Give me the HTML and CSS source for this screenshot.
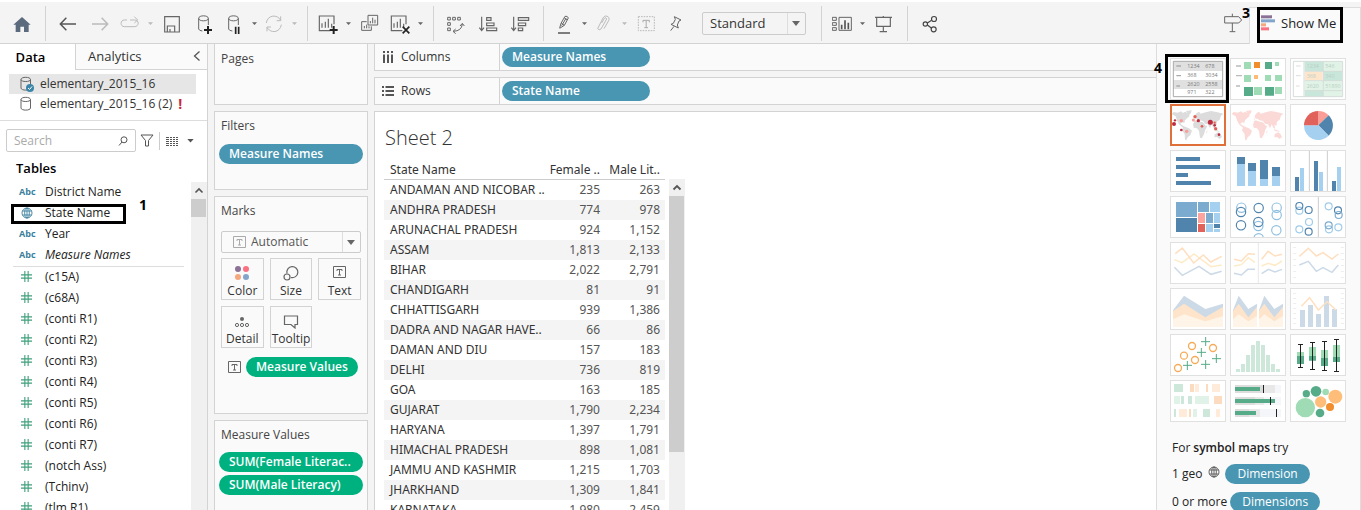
FILE: index.html
```html
<!DOCTYPE html>
<html lang="en">
<head>
<meta charset="utf-8">
<title>Sheet 2</title>
<link rel="stylesheet" href="styles.css">
</head>
<body>
<svg class="defs" aria-hidden="true">
  <symbol id="world" viewBox="0 0 162 120"><path d="M2 27L8 21L20 23L30 19L36 24L42 20L50 24L56 33L48 40L42 46L40 54L34 52L28 56L36 62L44 66L54 70L63 77L58 90L50 97L46 106L42 104L41 88L33 76L36 68L24 58L18 46L14 34zM44 18L62 16L60 24L54 30L48 22zM72 40L68 50L74 46L86 50L96 52L104 62L109 62L103 74L99 88L92 100L87 98L84 78L78 70L68 68L66 58L70 50L68 42zM71 33L77 24L85 20L88 26L104 22L120 18L140 22L157 26L150 32L146 44L138 50L136 62L130 60L133 72L127 68L122 58L117 70L111 58L102 56L96 48L86 46L80 42L72 40zM128 72L144 78L146 80L132 78zM131 88L141 82L148 86L153 96L146 102L138 96L130 97zM106 80L109 76L108 88z"/></symbol>
  <symbol id="caret" viewBox="0 0 21 21"><path d="M3 7h15l-7.5 8z"/></symbol>
  <symbol id="cyl" viewBox="0 0 14 16"><path d="M1 3.5C1 .6 10.500 .6 10.500 3.500C10.500 6.200 1 6.200 1 3.500V12C1 14.800 10.500 14.800 10.500 12V3.500" fill="none" stroke="#666"/></symbol>
  <symbol id="globe" viewBox="0 0 12 12"><g fill="none" stroke="currentColor" stroke-width=".9"><circle cx="6" cy="6" r="5"/><ellipse cx="6" cy="6" rx="2.300" ry="5"/><path d="M6 1v10M1.500 4h9M1.500 8h9"/></g></symbol>
  <symbol id="hash" viewBox="0 0 10 10"><path d="M3.500 0v10M6.500 0v10M0 3.500h10M0 6.500h10" stroke="currentColor" fill="none"/></symbol>
  <symbol id="tbox" viewBox="0 0 13 12"><path d="M.5 .5h12v11H.500zM4 5V3.500h5V5M6.500 3.500v5.500M5 9h3" fill="none" stroke="currentColor"/></symbol>
  <symbol id="sheeticon" viewBox="0 0 60 60"><path d="M45 32V7H1V51H34M9 42V29M19 42V24M28 42V15M38 42V30" fill="none" stroke="#666" stroke-width="3.500" transform="translate(3 -1)"/></symbol>
</svg>

<header class="toolbar">
  <div class="group home"><button class="tool" aria-label="Start page"><svg viewBox="36 39 60 60"><path d="M66 48L92 71H86V93H72V77H61V93H47V71H40z" fill="#5b6b7d"/></svg></button></div>
  <div class="group">
    <button class="tool" aria-label="Undo"><svg viewBox="174 39 60 60"><path d="M228 69H183M199 50L181 69L199 88" fill="none" stroke="#555" stroke-width="4.500"/></svg></button>
    <button class="tool" aria-label="Redo"><svg viewBox="270 39 60 60"><path d="M276 69H321M305 50L323 69L305 88" fill="none" stroke="#bbb" stroke-width="4.500"/></svg></button>
    <button class="tool narrow" aria-label="Replay"><svg viewBox="360 39 60 60"><path d="M381 57H373C360 57 360 77 373 77H404C417 77 419 57 404 57H390M403 47L413 57L403 66" fill="none" stroke="#bbb" stroke-width="3"/></svg></button>
    <button class="drop off" aria-label="Replay options"><svg><use href="#caret"/></svg></button>
    <button class="tool" aria-label="Save"><svg viewBox="486 39 60 60"><path d="M494 47H538V93H494zM502 92V75H524V92M510 92V84" fill="none" stroke="#666" stroke-width="3.500"/></svg></button>
    <button class="tool" aria-label="New data source"><svg viewBox="579 39 60 60"><path d="M593 52C593 42 622 42 622 52C622 62 593 62 593 52V84Q594 89 604 90M622 52V72" fill="none" stroke="#666" stroke-width="3"/><path d="M621 75V99M609 87H633" stroke="#222" stroke-width="6"/></svg></button>
    <button class="tool narrow" aria-label="Pause updates"><svg viewBox="672 39 60 60"><path d="M686 52C686 42 715 42 715 52C715 62 686 62 686 52V84Q687 89 697 90M715 52V72" fill="none" stroke="#666" stroke-width="3"/><path d="M707 77V99M716 77V99" stroke="#222" stroke-width="5"/></svg></button>
    <button class="drop" aria-label="Update options"><svg><use href="#caret"/></svg></button>
    <button class="tool narrow" aria-label="Refresh"><svg viewBox="791 39 60 60"><path d="M798 66C801 41 832 39 841 58M843 71C839 96 810 98 800 79M841 46V59H829M800 91V78H812" fill="none" stroke="#bbb" stroke-width="3"/></svg></button>
    <button class="drop off" aria-label="Refresh options"><svg><use href="#caret"/></svg></button>
  </div>
  <div class="group">
    <button class="tool narrow" aria-label="New worksheet"><svg viewBox="0 0 60 60"><use href="#sheeticon"/><path d="M47 36V60M35 48H59" stroke="#222" stroke-width="6"/></svg></button>
    <button class="drop" aria-label="New options"><svg><use href="#caret"/></svg></button>
    <button class="tool" aria-label="Duplicate"><svg viewBox="180 39 60 60"><path d="M204 43H233V72H204zM211 67V60M218 67V50M225 67V56M200 62H185V88H214V76M193 82V75M200 82V71M207 82V76" fill="none" stroke="#666" stroke-width="3"/></svg></button>
    <button class="tool narrow" aria-label="Clear sheet"><svg viewBox="0 0 60 60"><use href="#sheeticon"/><path d="M38 38L58 58M58 38L38 58" stroke="#222" stroke-width="5"/></svg></button>
    <button class="drop" aria-label="Clear options"><svg><use href="#caret"/></svg></button>
  </div>
  <div class="group">
    <button class="tool" aria-label="Swap rows and columns"><svg viewBox="438 39 60 60"><path d="M443 49H451V57H443zM458 49H466V57H458zM473 49H481V57H473zM443 65H451V73H443zM443 81H451V89H443zM487 69Q485 90 460 91M480 75L487 67L493 75M467 84L459 91L467 98" fill="none" stroke="#666" stroke-width="3"/></svg></button>
    <button class="tool" aria-label="Sort ascending"><svg viewBox="534 39 60 60"><path d="M545 47V88M538 80L545 89L552 80M560 50H573V58H560zM560 66H582V74H560zM560 81H590V89H560z" fill="none" stroke="#666" stroke-width="3.500"/></svg></button>
    <button class="tool" aria-label="Sort descending"><svg viewBox="630 39 60 60"><path d="M641 47V88M634 80L641 89L648 80M655 50H686V58H655zM655 66H677V74H655zM655 81H668V89H655z" fill="none" stroke="#666" stroke-width="3.500"/></svg></button>
  </div>
  <div class="group">
    <button class="tool narrow" aria-label="Highlight"><svg viewBox="768 39 60 60"><path d="M785 81L789 67L801 46Q809 44 811 51L799 73L785 82M790 67L799 73M799 51L807 56M791 74L804 52" fill="none" stroke="#666" stroke-width="3"/><path d="M780 96H816" stroke="#666" stroke-width="5"/></svg></button>
    <button class="drop" aria-label="Highlight options"><svg><use href="#caret"/></svg></button>
    <button class="tool narrow off" aria-label="Group members"><svg viewBox="881 39 60 60"><path d="M904 66L912 52Q917 47 919 54L902 84Q896 89 892 83L908 51Q915 40 925 49Q928 53 925 59L911 83" fill="none" stroke="#bbb" stroke-width="3"/></svg></button>
    <button class="drop off" aria-label="Group options"><svg><use href="#caret"/></svg></button>
    <button class="tool" aria-label="Show mark labels"><svg viewBox="46 39 60 60"><path d="M53 47H101V89H53z" fill="none" stroke="#bbb" stroke-width="3" stroke-dasharray="5 3"/><path d="M67 64V58H86V64M76.500 58V80M71 80H82" fill="none" stroke="#aaa" stroke-width="3"/></svg></button>
    <button class="tool narrow" aria-label="Fix axes"><svg viewBox="136 39 60 60"><path d="M161 47L181 57L175 60L170 72L173 81L151 70L158 67L164 55zM160 76L150 89" fill="none" stroke="#666" stroke-width="3"/></svg></button>
    <label class="picker fit"><select aria-label="Fit"><option>Standard</option></select></label>
  </div>
  <div class="group">
    <button class="tool narrow" aria-label="Show or hide cards"><svg viewBox="642 39 60 60"><path d="M643 49H655V58H643zM643 65H655V73H643zM643 80H655V88H643zM663 49H700V88H663z" fill="none" stroke="#666" stroke-width="3"/><path d="M671 85V71M681 85V58M691 85V65" stroke="#555" stroke-width="5"/></svg></button>
    <button class="drop" aria-label="Card options"><svg><use href="#caret"/></svg></button>
    <button class="tool" aria-label="Presentation mode"><svg viewBox="762 39 60 60"><path d="M765 49H816M770 50V76H811V50M790 76V92M779 92H801M790 49V45" fill="none" stroke="#666" stroke-width="3.500"/></svg></button>
  </div>
  <div class="group">
    <button class="tool" aria-label="Share"><svg viewBox="900 39 60 60"><g fill="none" stroke="#444" stroke-width="3.500"><circle cx="916" cy="69" r="6.500"/><circle cx="942" cy="54" r="7.500"/><circle cx="941" cy="85" r="7.500"/><path d="M922 66L935 58M922 72L934 81"/></g></svg></button>
  </div>
  <button class="tool guide" aria-label="Guide"><svg viewBox="219 39 60 60"><path d="M224 50H266L275 60L266 69H224zM247 50V41M247 69V95M239 95H256" fill="none" stroke="#666" stroke-width="3"/></svg></button>
  <div class="showtab">
    <span class="note n3">3</span>
    <button class="showme"><svg viewBox="333 44 45 48"><path d="M333 45h33v9h-33z" fill="#8a7195"/><path d="M333 57h42v9h-42z" fill="#83a5cc"/><path d="M333 69h15v9h-15z" fill="#f5a77e"/><path d="M333 81h24v9h-24z" fill="#fa7184"/></svg>Show Me</button>
  </div>
</header>

<div class="workspace">
<aside class="data">
  <div class="tabs"><button class="tab on">Data</button><button class="tab">Analytics<svg viewBox="0 0 8 10"><path d="M6.500 .5L1.500 5L6.500 9.500" fill="none" stroke="#555" stroke-width="1.300"/></svg></button></div>
  <ul class="sources">
    <li class="on"><svg viewBox="0 0 14 16"><use href="#cyl" width="14" height="16"/><circle cx="10" cy="12" r="4" fill="#3b86a8"/><path d="M8 12l1.500 1.500l2.500-3" fill="none" stroke="#fff"/></svg>elementary_2015_16</li>
    <li><svg><use href="#cyl"/></svg>elementary_2015_16 (2)<b class="warn">!</b></li>
  </ul>
  <div class="find">
    <div class="search"><input type="text" placeholder="Search" aria-label="Search"><svg viewBox="0 0 10 10"><circle cx="6" cy="3.800" r="3" fill="none" stroke="#555"/><path d="M4 6L1 9.500" stroke="#555"/></svg></div>
    <button aria-label="Filter"><svg class="funnel" viewBox="0 0 14 13"><path d="M1 1h12L8.500 6.500V12H5.500V6.500z" fill="none" stroke="#555"/></svg></button>
    <button class="listing" aria-label="View options"><svg class="lines" viewBox="0 0 12 10"><path d="M0 1.500h12M0 3.500h12M0 5.500h12M0 7.500h12M0 9.500h12" stroke="#555" stroke-dasharray="3 1 2 1 2 1 2"/></svg><svg class="car"><use href="#caret"/></svg></button>
  </div>
  <h2>Tables</h2>
  <div class="fields">
    <ul>
      <li><span class="abc">Abc</span>District Name</li>
      <li class="boxed"><svg class="globe"><use href="#globe"/></svg>State Name<span class="note n1">1</span></li>
      <li><span class="abc">Abc</span>Year</li>
      <li class="last"><span class="abc">Abc</span><i>Measure Names</i></li>
      <li><svg class="hash"><use href="#hash"/></svg>(c15A)</li>
      <li><svg class="hash"><use href="#hash"/></svg>(c68A)</li>
      <li><svg class="hash"><use href="#hash"/></svg>(conti R1)</li>
      <li><svg class="hash"><use href="#hash"/></svg>(conti R2)</li>
      <li><svg class="hash"><use href="#hash"/></svg>(conti R3)</li>
      <li><svg class="hash"><use href="#hash"/></svg>(conti R4)</li>
      <li><svg class="hash"><use href="#hash"/></svg>(conti R5)</li>
      <li><svg class="hash"><use href="#hash"/></svg>(conti R6)</li>
      <li><svg class="hash"><use href="#hash"/></svg>(conti R7)</li>
      <li><svg class="hash"><use href="#hash"/></svg>(notch Ass)</li>
      <li><svg class="hash"><use href="#hash"/></svg>(Tchinv)</li>
      <li><svg class="hash"><use href="#hash"/></svg>(tlm R1)</li>
    </ul>
    <div class="scroll"><svg viewBox="0 0 16 17"><path d="M4.500 10.500L8 7L11.500 10.500" fill="none" stroke="#555" stroke-width="1.600"/></svg><div class="thumb short"></div></div>
  </div>
</aside>

<section class="cards">
  <div class="card pages"><h3>Pages</h3></div>
  <div class="card filters"><h3>Filters</h3><button class="pill">Measure Names</button></div>
  <div class="card marks"><h3>Marks</h3>
    <label class="picker kind"><svg class="tbox"><use href="#tbox"/></svg><select aria-label="Mark type"><option>Automatic</option></select></label>
    <div class="props">
      <button><svg viewBox="0 0 18 16"><circle cx="5" cy="4" r="3" fill="#8a7195"/><circle cx="13" cy="4" r="3" fill="#fa7184"/><circle cx="5" cy="12" r="3" fill="#f5a77e"/><circle cx="13" cy="12" r="3" fill="#83a5cc"/></svg>Color</button>
      <button><svg viewBox="0 0 18 16"><g fill="none" stroke="#666" stroke-width="1.200"><path d="M5 8.500A5.500 5.500 0 1 1 9 12.500"/><circle cx="5" cy="12" r="3"/></g></svg>Size</button>
      <button><svg class="tbox"><use href="#tbox"/></svg>Text</button>
      <button><svg viewBox="0 0 18 16"><circle cx="9" cy="6" r="2" fill="#666"/><g fill="none" stroke="#666"><circle cx="4" cy="12" r="1.600"/><circle cx="9" cy="12" r="1.600"/><circle cx="14" cy="12" r="1.600"/></g></svg>Detail</button>
      <button><svg viewBox="0 0 18 16"><path d="M2.500 3h13v8.500H13V15L9 11.500H2.500z" fill="none" stroke="#666" stroke-width="1.200"/></svg>Tooltip</button>
    </div>
    <div class="enc"><svg class="tbox"><use href="#tbox"/></svg><button class="pill green">Measure Values</button></div>
  </div>
  <div class="card values"><h3>Measure Values</h3><button class="pill green">SUM(Female Literac..</button><button class="pill green">SUM(Male Literacy)</button></div>
</section>

<main class="view">
  <div class="shelf"><div class="name"><svg viewBox="0 0 12 12"><path d="M2 3.500V12M6 3.500V12M10 3.500V12M2 0v2M6 0v2M10 0v2" stroke="#555" stroke-width="2"/></svg>Columns</div><button class="pill">Measure Names</button></div>
  <div class="shelf"><div class="name"><svg viewBox="0 0 12 12"><path d="M3.500 2H12M3.500 6H12M3.500 10H12M0 2h2M0 6h2M0 10h2" stroke="#555" stroke-width="2"/></svg>Rows</div><button class="pill">State Name</button></div>
  <div class="sheet">
    <h1>Sheet 2</h1>
    <div class="grid">
    <table>
      <thead><tr><th scope="col">State Name</th><th scope="col">Female ..</th><th scope="col">Male Lit..</th></tr></thead>
      <tbody>
        <tr><td>ANDAMAN AND NICOBAR ..</td><td>235</td><td>263</td></tr>
        <tr><td>ANDHRA PRADESH</td><td>774</td><td>978</td></tr>
        <tr><td>ARUNACHAL PRADESH</td><td>924</td><td>1,152</td></tr>
        <tr><td>ASSAM</td><td>1,813</td><td>2,133</td></tr>
        <tr><td>BIHAR</td><td>2,022</td><td>2,791</td></tr>
        <tr><td>CHANDIGARH</td><td>81</td><td>91</td></tr>
        <tr><td>CHHATTISGARH</td><td>939</td><td>1,386</td></tr>
        <tr><td>DADRA AND NAGAR HAVE..</td><td>66</td><td>86</td></tr>
        <tr><td>DAMAN AND DIU</td><td>157</td><td>183</td></tr>
        <tr><td>DELHI</td><td>736</td><td>819</td></tr>
        <tr><td>GOA</td><td>163</td><td>185</td></tr>
        <tr><td>GUJARAT</td><td>1,790</td><td>2,234</td></tr>
        <tr><td>HARYANA</td><td>1,397</td><td>1,791</td></tr>
        <tr><td>HIMACHAL PRADESH</td><td>898</td><td>1,081</td></tr>
        <tr><td>JAMMU AND KASHMIR</td><td>1,215</td><td>1,703</td></tr>
        <tr><td>JHARKHAND</td><td>1,309</td><td>1,841</td></tr>
        <tr><td>KARNATAKA</td><td>1,980</td><td>2,459</td></tr>
      </tbody>
    </table>
    <div class="scroll"><svg viewBox="0 0 16 17"><path d="M4.500 10.500L8 7L11.500 10.500" fill="none" stroke="#555" stroke-width="1.800"/></svg><div class="thumb tall"></div></div>
    </div>
  </div>
</main>

<aside class="show">
  <div class="charts">
    <button class="picked" aria-label="Text table"><svg viewBox="63 177 162 120"><path d="M70 184h148v106H70z" fill="#fff"/><path d="M70 184h148v29H70zM70 240h148v27H70z" fill="#e0e0e0"/><path d="M70 184h148v106H70z" fill="none" stroke="#aaa" stroke-width="3"/><path d="M79 198h14M79 227h14M79 258h11" stroke="#aaa" stroke-width="4"/><g font-size="16" fill="#777"><text x="112" y="205">1234</text><text x="166" y="205">678</text><text x="112" y="232">368</text><text x="166" y="232">3034</text><text x="112" y="259">2620</text><text x="166" y="259">2558</text><text x="112" y="283">971</text><text x="166" y="283">322</text></g></svg><span class="note n4">4</span></button>
    <button aria-label="Heat map"><svg viewBox="243 177 162 120"><path d="M258 198h15M258 227h18M258 258h12" stroke="#bbb" stroke-width="4"/><path d="M282 186h21v21h-21zM375 186h12v12h-12zM282 225h21v21h-21zM345 225h18v18h-18zM375 225h21v18h-21zM312 261h24v24h-24zM375 261h21v21h-21z" fill="#9fdbb5"/><path d="M345 186h21v21h-21zM282 261h27v27h-27zM345 261h27v26h-27z" fill="#56ab88"/><path d="M312 186h18v18h-18z" fill="#f08e2e"/><path d="M312 225h12v12h-12z" fill="#fdbb74"/></svg></button>
    <button aria-label="Highlight table"><svg viewBox="423 177 162 120"><path d="M464 184h56v29h-56zM520 213h57v30h-57zM464 270h56v20h-56z" fill="#c9e6db"/><path d="M520 184h57v29h-57zM464 243h113v27H464zM520 270h57v20h-57z" fill="#e0f3e6"/><path d="M464 215h54v26h-54z" fill="#fee6cc"/><path d="M430 184h148v106H430zM462 184v106M520 184v106M464 214h113M464 242h113M464 272h113" fill="none" stroke="#d5ddd9" stroke-width="3"/><path d="M438 198h14M438 227h14M438 258h11" stroke="#ddd" stroke-width="3"/><g font-size="16" fill="#bbcfc5"><text x="470" y="205">1234</text><text x="526" y="205">546</text><text x="470" y="234">368</text><text x="526" y="234">340</text><text x="470" y="264">2620</text><text x="526" y="264">51890</text></g></svg></button>
    <button class="best" aria-label="Symbol map"><svg viewBox="63 315 162 120"><use href="#world" x="63" y="315" width="162" height="120" fill="#dcdcdc"/><g fill="#bf2c40"><circle cx="72" cy="372" r="6"/><circle cx="75" cy="361" r="3.500"/><circle cx="145" cy="362" r="5"/><circle cx="181" cy="367" r="7.500"/><circle cx="94" cy="390" r="4"/><circle cx="207" cy="404" r="4"/><circle cx="194" cy="376" r="4"/></g><g fill="#e2615a"><circle cx="135" cy="350" r="5"/><circle cx="156" cy="379" r="4"/><circle cx="197" cy="386" r="5"/><circle cx="194" cy="368" r="3.500"/></g><g fill="#fb9d97"><circle cx="94" cy="362" r="5"/><circle cx="110" cy="394" r="5"/><circle cx="130" cy="360" r="4.500"/></g></svg></button>
    <button aria-label="Filled map"><svg viewBox="0 0 162 120"><use href="#world" width="162" height="120" fill="#fbd9d7"/></svg></button>
    <button aria-label="Pie chart"><svg viewBox="423 315 162 120"><path d="M505 376V333A43 43 0 0 1 536 346z" fill="#fb9d97"/><path d="M505 376L536 346A43 43 0 0 1 536 407z" fill="#5084ad"/><path d="M505 376L536 407A43 43 0 0 1 462 376z" fill="#a5d0f0"/><path d="M505 376H462A43 43 0 0 1 505 333z" fill="#e0625a"/></svg></button>

    <button aria-label="Horizontal bars"><svg viewBox="33 18 162 120"><path d="M48 36h72v12H48zM48 60h132v12H48zM48 84h36v12H48zM48 108h105v12H48z" fill="#5084ad"/></svg></button>
    <button aria-label="Stacked bars"><svg viewBox="213 18 162 120"><path d="M231 36h24v21h-24zM264 54h24v24h-24zM300 45h24v57h-24zM336 66h24v27h-24z" fill="#5084ad"/><path d="M231 57h24v66h-24zM264 78h24v45h-24zM300 102h24v21h-24zM336 93h24v30h-24z" fill="#a5d0f0"/></svg></button>
    <button aria-label="Side-by-side bars"><svg viewBox="393 18 162 120"><path d="M448 18v120M502 18v120" stroke="#ccc" stroke-width="3"/><path d="M405 96h12v42h-12zM462 48h12v90h-12zM516 108h12v30h-12z" fill="#5084ad"/><path d="M420 69h12v69h-12zM477 81h12v57h-12zM531 66h12v72h-12z" fill="#a5d0f0"/></svg></button>

    <button aria-label="Treemap"><svg viewBox="33 156 162 120"><path d="M48 171h63v45H48zM114 171h33v30h-33zM138 204h21v30h-21z" fill="#7cabd0"/><path d="M48 219h63v42H48zM162 237h18v12h-18z" fill="#5084ad"/><path d="M150 171h30v30h-30zM162 204h18v30h-18zM138 237h21v24h-21zM162 252h18v9h-18z" fill="#a5d0f0"/><path d="M114 204h21v30h-21z" fill="#fea49e"/><path d="M114 237h21v24h-21z" fill="#e0625a"/></svg></button>
    <button aria-label="Circle views"><svg viewBox="213 156 162 120"><g fill="none" stroke="#8fbfe0" stroke-width="3.500"><circle cx="244" cy="188" r="14"/><circle cx="295" cy="243" r="14"/><circle cx="296" cy="280" r="14"/><circle cx="350" cy="210" r="14"/><circle cx="349" cy="256" r="14"/><circle cx="350" cy="188" r="14"/><g stroke="#5084ad"><circle cx="243" cy="201" r="14"/><circle cx="243" cy="241" r="14"/><circle cx="296" cy="189" r="14"/><circle cx="295" cy="231" r="14"/></g></g></svg></button>
    <button aria-label="Side-by-side circles"><svg viewBox="393 156 162 120"><path d="M475 156v120" stroke="#ccc" stroke-width="3"/><g fill="none" stroke="#9fcbe9" stroke-width="3.500"><circle cx="418" cy="197" r="10.500"/><circle cx="418" cy="253" r="10.500"/><circle cx="447" cy="231" r="10.500"/><circle cx="506" cy="184" r="10.500"/><circle cx="535" cy="247" r="10.500"/><circle cx="507" cy="253" r="10.500"/><g stroke="#5084ad"><circle cx="418" cy="183" r="10.500"/><circle cx="446" cy="195" r="10.500"/><circle cx="446" cy="260" r="10.500"/><circle cx="534" cy="196" r="10.500"/></g><g stroke="#7cabd0"><circle cx="506" cy="241" r="10.500"/><circle cx="536" cy="210" r="10.500"/></g></g></svg></button>

    <button aria-label="Continuous lines"><svg viewBox="33 294 162 120"><g fill="none" stroke-width="4.500"><path d="M43 344L66 353L102 327L153 365L185 360" stroke="#fdebc8"/><path d="M46 326L67 309L101 354L130 330L152 351L185 334" stroke="#fedfc0"/><path d="M43 367L67 391L117 364L153 388L185 379" stroke="#ccdae7"/></g></svg></button>
    <button aria-label="Discrete lines"><svg viewBox="213 294 162 120"><path d="M295 294v120" stroke="#e8e8e8" stroke-width="3"/><g fill="none" stroke-width="4.500"><path d="M222 363L244 359L265 338L285 352M305 363L324 355L345 361L366 348" stroke="#fdebc8"/><path d="M222 343L244 348L265 326L285 328M305 343L324 319L345 333L366 328" stroke="#fedfc0"/><path d="M222 385L244 390L263 373H285M305 386L325 373L345 381L366 373" stroke="#ccdae7"/></g></svg></button>
    <button aria-label="Dual lines"><svg viewBox="393 294 162 120"><path d="M404 306v96M547 306v96" stroke="#eee" stroke-width="9" stroke-dasharray="3 15"/><g fill="none" stroke-width="4.500"><path d="M418 334L445 310L469 333L489 323L516 342L535 327" stroke="#fedfc0"/><path d="M418 360L445 349L469 379L489 368L516 382L535 360" stroke="#ccdae7"/></g></svg></button>

    <button aria-label="Continuous area"><svg viewBox="33 12 162 120"><path d="M39 76L72 32L136 72L189 56V126H39z" fill="#ccdae7"/><path d="M39 78L72 56L136 97L189 66V126H39z" fill="#fee4ca"/><path d="M39 103L72 88L136 109L189 93V126H39z" fill="#fef4e7"/></svg></button>
    <button aria-label="Discrete area"><svg viewBox="213 12 162 120"><path d="M219 76L236 32L265 72L291 56V126H219zM297 76L313 32L343 72L369 56V126H297z" fill="#ccdae7"/><path d="M219 78L236 56L265 97L291 66V126H219zM297 78L313 56L343 97L369 66V126H297z" fill="#fee4ca"/><path d="M219 103L236 88L265 109L291 93V126H219zM297 103L313 88L343 109L369 93V126H297z" fill="#fef4e7"/></svg></button>
    <button aria-label="Dual combination"><svg viewBox="393 12 162 120"><path d="M404 24v96M547 24v96" stroke="#eee" stroke-width="9" stroke-dasharray="3 12"/><path d="M420 75h15v51h-15zM444 60h15v66h-15zM468 87h15v39h-15zM492 33h15v93h-15zM516 72h15v54h-15z" fill="#ccdae7"/><path d="M424 64L449 38L475 75L501 50L528 75" fill="none" stroke="#fee0c2" stroke-width="4.500"/></svg></button>

    <button aria-label="Scatter plot"><svg viewBox="33 150 162 120"><g fill="none" stroke="#f5ac5a" stroke-width="4"><circle cx="96" cy="183" r="10.500"/><circle cx="159" cy="189" r="10.500"/><circle cx="72" cy="212" r="10.500"/><circle cx="105" cy="225" r="10.500"/><circle cx="54" cy="249" r="10.500"/></g><path d="M123 170h27M137 156v27M111 202h27M124 189v27M156 221h27M169 207v27M123 238h27M137 225v27M69 241h27M82 228v27" stroke="#56ab88" stroke-width="3"/></svg></button>
    <button aria-label="Histogram"><svg viewBox="213 150 162 120"><path d="M228 252h12v9h-12zM243 237h12v24h-12zM258 210h12v51h-12zM273 180h12v81h-12zM288 168h12v93h-12zM303 180h12v81h-12zM318 210h12v51h-12zM333 237h12v24h-12zM348 252h12v9h-12z" fill="#cde7db"/></svg></button>
    <button aria-label="Box plot"><svg viewBox="393 150 162 120"><path d="M411 201h21v12h-21zM447 186h21v27h-21zM483 195h21v24h-21zM519 180h21v36h-21z" fill="#9fdbb5"/><path d="M411 213h21v24h-21zM447 213h21v14h-21zM483 219h21v24h-21zM519 216h21v15h-21z" fill="#56ab88"/><path d="M421.500 178v69M457.500 172v81M493.500 170v87M529.500 163v96M414 178.500h15M414 247.500h15M450 172.500h15M450 253.500h15M486 169.500h15M486 256.500h15M522 163.500h15M522 259.500h15" stroke="#222" stroke-width="3"/></svg></button>

    <button aria-label="Gantt"><svg viewBox="33 288 162 120"><path d="M42 297h27v24H42zM63 333h9v24h-9zM84 333h12v24H84zM42 372h6v24h-6zM129 372h21v24h-21z" fill="#cde7db"/><path d="M42 333h18v24H42zM105 333h42v24h-42zM99 372h12v24H99z" fill="#e1f3e8"/><path d="M90 297h12v24H90zM138 297h6v24h-6zM162 333h24v24h-24zM87 372h6v24h-6z" fill="#fbdcc0"/><path d="M105 297h12v24h-12zM156 297h24v24h-24zM57 372h24v24H57zM168 372h12v24h-12z" fill="#feebd9"/></svg></button>
    <button aria-label="Bullet graph"><svg viewBox="213 288 162 120"><path d="M225 300h138v24H225zM225 336h138v24H225zM225 372h138v24H225z" fill="#f4f6f9"/><path d="M225 300h120v24H225zM225 336h87v24H225zM225 372h75v24H225z" fill="#e8e8e8"/><path d="M225 300h85v24H225zM225 336h60v24H225zM225 372h42v24H225z" fill="#ddd"/><path d="M225 306h75v12H225zM225 342h120v12H225zM225 378h63v12H225z" fill="#56ab88"/><path d="M310.500 300v24M331.500 336v24M349.500 372v24" stroke="#222" stroke-width="3"/></svg></button>
    <button aria-label="Packed bubbles"><svg viewBox="393 288 162 120"><g fill="#56ab88"><circle cx="439" cy="326" r="11"/><circle cx="468" cy="319" r="16"/><circle cx="480" cy="384" r="13"/></g><g fill="#9fdbb5"><circle cx="436" cy="368" r="29"/><circle cx="497" cy="321" r="10"/></g><g fill="#febd78"><circle cx="482" cy="351" r="17"/><circle cx="526" cy="335" r="21"/></g><circle cx="510" cy="366" r="12" fill="#f08e2e"/></svg></button>
  </div>
  <div class="hint">
    <p>For <b>symbol maps</b> try</p>
    <p>1 geo <svg class="geo"><use href="#globe"/></svg><span class="pill plain">Dimension</span></p>
    <p>0 or more <span class="pill plain">Dimensions</span></p>
  </div>
</aside>
</div>
</body>
</html>
```
FILE: styles.css
```css
*, *::before, *::after { box-sizing: border-box; }
html, body { height: 100%; }
body {
  margin: 0; padding-top: 2px; overflow: hidden;
  display: flex; flex-direction: column;
  background: #fff; color: #333;
  font: 12px/20px "Open Sans", "Noto Sans", sans-serif;
}
button, select, input { font: inherit; color: inherit; margin: 0; padding: 0; border: 0; background: none; }
h1, h2, h3, p, ul { margin: 0; padding: 0; font-weight: 400; font-size: inherit; list-style: none; }
svg { display: block; flex: none; }
.defs { position: absolute; width: 0; height: 0; }

/* toolbar */
.toolbar { flex: none; display: flex; align-items: stretch; height: 42px; background: #f4f4f4; border-bottom: 1px solid #d3d3d3; }
.group { display: flex; align-items: center; margin: 4px 0 2px; padding: 0 7px 0 6px; border-right: 1px solid #d3d3d3; }
.group.home { width: 46px; }
.group:nth-of-type(7) { border: 0; }
.tool { width: 32px; display: flex; justify-content: center; align-items: center; }
.tool.narrow { width: 28px; }
.tool svg { width: 20px; height: 20px; }
.drop { width: 12px; display: flex; justify-content: center; fill: #666; }
.drop svg { width: 7px; height: 7px; }
.drop.off { fill: #bbb; }
.picker { position: relative; display: flex; align-items: center; border: 1px solid #ccc; border-radius: 2px; background: #fafafa; }
.picker select { appearance: none; width: 100%; height: 100%; }
.picker::before { content: ""; position: absolute; right: 17px; top: 0; bottom: 0; border-left: 1px solid #ddd; }
.picker::after { content: ""; position: absolute; right: 5px; top: 8px; border: 4px solid transparent; border-top: 5px solid #666; border-bottom: 0; }
.fit { width: 104px; height: 23px; margin: 0 8px 0 12px; background: #f4f4f4; }
.fit select { padding: 0 0 2px 7px; font-size: 13px; }
.guide { margin-left: auto; }
.showtab { position: relative; width: 112px; margin: 5px 0 -1px; padding-left: 7px; background: #fafafa; border: solid #ddd; border-width: 1px 1px 0; }
.showme { width: 86px; height: 36px; margin-top: -1px; border: 3px solid #000; display: flex; align-items: center; gap: 5px; padding: 0 0 4px 1px; font-size: 13px; color: #222; white-space: nowrap; }
.showme svg { width: 15px; height: 16px; }
.note { position: absolute; font: 700 14px/16px "Open Sans", sans-serif; color: #000; }
.n3 { left: -8px; top: -3px; }
.n4 { left: -17px; top: 1px; }

.workspace { flex: 1; min-height: 0; display: flex; background: #f4f4f4; }

/* data pane */
.data { width: 208px; flex: none; background: #fff; border-right: 1px solid #d3d3d3; display: flex; flex-direction: column; }
.tabs { display: flex; height: 26px; flex: none; }
.tab { font-size: 13px; }
.tab.on { width: 75px; padding-right: 14px; font-weight: 600; color: #000; }
.tab:not(.on) { flex: 1; display: flex; align-items: center; justify-content: space-between; padding: 0 6px 2px 12px; background: #fafafa; border: solid #d3d3d3; border-width: 0 0 1px 1px; }
.tab svg { width: 8px; height: 10px; }
.sources { padding: 4px 0 6px 9px; border-bottom: 1px solid #ddd; flex: none; }
.sources li { display: flex; align-items: center; width: 187px; height: 20px; padding-left: 11px; }
.sources li.on { background: #e6e6e6; }
.sources svg { width: 14px; height: 16px; margin-right: 6px; }
.warn { margin-left: 6px; color: #c8283c; font-size: 14px; }
.find { display: flex; align-items: center; margin: 8px 10px 0 6px; height: 23px; }
.search { display: flex; align-items: center; width: 130px; height: 23px; padding: 0 7px; border: 1px solid #ccc; border-radius: 2px; }
.search input { flex: 1; min-width: 0; outline: 0; }
.search input::placeholder { color: #aaa; }
.search svg { width: 10px; height: 10px; }
.funnel { width: 14px; height: 13px; margin: 0 5px 0 4px; }
.listing { display: flex; align-items: center; gap: 8px; height: 18px; padding-left: 6px; border-left: 1px solid #ccc; }
.lines { width: 12px; height: 10px; }
.car { width: 9px; height: 9px; fill: #555; }
.data h2 { padding: 6px 0 4px 16px; font-size: 13px; font-weight: 600; color: #000; flex: none; }
.fields { flex: 1; min-height: 0; display: flex; justify-content: space-between; overflow: hidden; }
.fields ul { width: 171px; margin-left: 13px; }
.fields li { position: relative; display: flex; align-items: center; height: 21px; padding: 0 0 2px 32px; color: #222; }
.fields li > svg, .abc { position: absolute; left: 6px; }
.abc { font: 700 9px/12px "Open Sans", sans-serif; color: #3b7f9c; }
.globe { width: 12px; height: 12px; color: #3b7f9c; }
.fields .globe, .fields .hash { left: 8px; }
.hash { width: 11px; height: 11px; color: #3fa07c; }
.fields .last { height: 22px; border-bottom: 1px solid #ddd; }
.fields .boxed::before { content: ""; position: absolute; left: -2px; top: 1px; width: 115px; height: 20px; border: 3px solid #000; }
.n1 { left: 126px; top: -6px; }
.scroll { width: 16px; background: #f0f0f0; overflow: hidden; }
.scroll svg { width: 16px; height: 17px; }
.thumb { background: #cdcdcd; width: 15px; }
.thumb.short { height: 18px; }
.thumb.tall { height: 256px; }

/* cards */
.cards { width: 154px; flex: none; margin: 0 6px; display: flex; flex-direction: column; gap: 6px; overflow: hidden; }
.card { flex: none; background: #fafafa; border: 1px solid #d3d3d3; padding: 0 4px; }
.card:first-child { border-top: 0; }
.card h3 { padding: 4px 2px 7px; color: #444; }
.pages { height: 61px; }
.pages h3 { padding-top: 5px; }
.filters { height: 79px; }
.filters h3 { padding-bottom: 8px; }
.marks { height: 218px; }
.values { height: 120px; }
.pill { display: block; height: 20px; padding: 0 10px; border-radius: 10px; background: #4996b2; color: #fff; font-weight: 600; font-size: 12px; line-height: 20px; text-align: left; white-space: nowrap; }
.pill.green { background: #00b180; }
.card > .pill { width: 100%; margin-bottom: 3px; }
.kind { height: 22px; margin: 3px 2px 5px; padding-left: 11px; }
.kind select { padding-left: 5px; color: #555; }
.tbox { width: 13px; height: 12px; color: #666; }
.kind .tbox { color: #aaa; }
.props { display: grid; grid-template-columns: repeat(3, 1fr); gap: 6px; margin: 0 2px; }
.props button { height: 42px; border: 1px solid #d3d3d3; display: flex; flex-direction: column; align-items: center; justify-content: flex-end; gap: 1px; line-height: 17px; }
.props svg { width: 18px; height: 16px; }
.props .tbox { width: 13px; height: 12px; margin-bottom: 3px; }
.enc { display: flex; align-items: center; gap: 5px; margin: 9px 6px 0 9px; }
.enc .pill { flex: 1; }

/* view */
.view { flex: 1; min-width: 0; display: flex; flex-direction: column; gap: 6px; }
.shelf { flex: none; height: 28px; display: flex; align-items: center; background: #fafafa; border: 1px solid #d3d3d3; border-right: 0; }
.shelf:first-child { height: 27px; border-top: 0; }
.name { width: 125px; height: 100%; padding-left: 7px; display: flex; align-items: center; gap: 7px; border-right: 1px solid #d3d3d3; }
.name svg { width: 12px; height: 12px; }
.shelf .pill { width: 148px; margin-left: 2px; }
.sheet { flex: 1; min-height: 0; overflow: hidden; background: #fff; border: 1px solid #d3d3d3; border-width: 1px 0 0 1px; padding: 12px 0 0 9px; }
h1 { font-size: 20px; line-height: 28px; font-weight: 300; padding-left: 1px; color: #333; }
.grid { display: flex; gap: 4px; margin-top: 8px; }
table { flex: none; width: 281px; table-layout: fixed; border-collapse: separate; border-spacing: 0; font-family: "Noto Sans", sans-serif; color: #333; }
th, td { height: 20px; padding: 0 5px 0 0; text-align: right; white-space: nowrap; font-weight: 400; line-height: 20px; }
th { width: 60px; border-bottom: 1px solid #ccc; line-height: 19px; }
th:first-child { width: 161px; }
th:first-child, td:first-child { text-align: left; padding: 0 0 0 6px; }
td + td { color: #555; }
tbody tr:nth-child(even) { background: #f4f4f4; }
.grid .scroll { margin-top: 19px; }

/* show me */
.show { width: 205px; flex: none; padding: 14px 13px 0; background: #fafafa; border: solid #ddd; border-width: 0 1px; }
.charts { display: grid; grid-template-columns: repeat(3, 56px); gap: 4px; }
.charts button { position: relative; height: 42px; border: 1px solid #e0e0e0; background: #fff; }
.charts svg { width: 100%; height: 100%; }
.charts text { font-family: "Open Sans", sans-serif; }
.charts .best { outline: 2px solid #e0703a; outline-offset: -2px; }
.picked::before { content: ""; position: absolute; inset: -5px -4px -4px -6px; border: 3px solid #000; z-index: 1; }
.hint { padding: 14px 0 0 2px; color: #222; white-space: nowrap; }
.hint p { display: flex; align-items: center; height: 28px; gap: 3px; }
.hint p:first-child { height: 24px; }
.hint b { font-weight: 600; }
.geo { width: 12px; height: 12px; margin: 0 2px 4px 3px; color: #555; }
.hint .plain { padding: 0 12px; font-weight: 400; }
```
